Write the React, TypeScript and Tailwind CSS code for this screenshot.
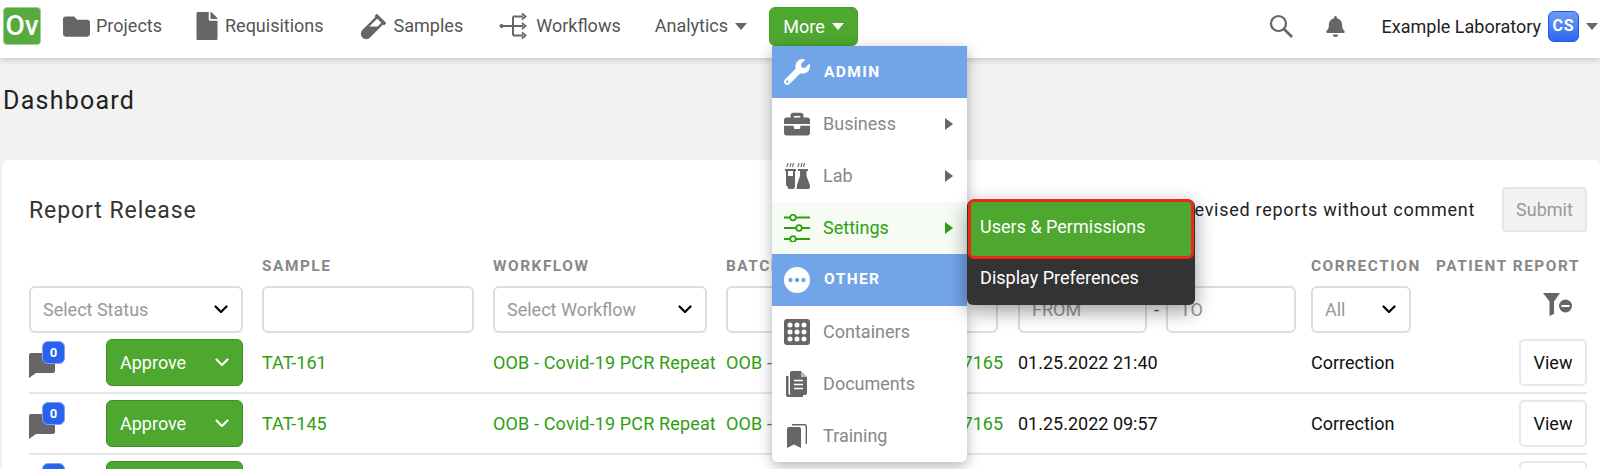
import React from "react";
import { FaFolder, FaFile, FaVial, FaWrench, FaBriefcase, FaBell } from "react-icons/fa";

const GRID = "grid grid-cols-[233px_231px_233px_150px_142px_293px_124px_152px]";

function Caret({ className = "" }: { className?: string }) {
  return <span className={`inline-block w-0 h-0 border-l-[6px] border-r-[6px] border-t-[7px] border-l-transparent border-r-transparent ${className}`} />;
}

function Chevron({ color = "#000", className = "" }: { color?: string; className?: string }) {
  return (
    <svg width="14" height="9" viewBox="0 0 14 9" className={className} fill="none">
      <path d="M1.5 1.5 L7 7 L12.5 1.5" stroke={color} strokeWidth="2.2" strokeLinecap="round" strokeLinejoin="round" />
    </svg>
  );
}

function WorkflowIcon() {
  return (
    <svg width="28" height="28" viewBox="0 0 28 28" fill="none" stroke="#666" strokeWidth="2">
      <circle cx="2.5" cy="14" r="2" fill="#666" stroke="none" />
      <path d="M3 14H24M14 4.5V23.5M14 4.5H24M14 23.5H24" />
      <path d="M23 1.5 L26.5 4.5 L23 7.5M23 11 L26.5 14 L23 17M23 20.5 L26.5 23.5 L23 26.5" strokeWidth="1.8" />
    </svg>
  );
}

function SlidersIcon() {
  return (
    <svg width="26" height="28" viewBox="0 0 26 28" fill="none" stroke="#2f9e12" strokeWidth="1.8">
      <path d="M0 3.5H6M12 3.5H26M0 14H12M18 14H26M0 25H6M12 25H26" />
      <circle cx="9" cy="3.5" r="2.8" />
      <circle cx="15" cy="14" r="2.8" />
      <circle cx="9" cy="25" r="2.8" />
    </svg>
  );
}

function LabIcon() {
  return (
    <svg width="26" height="27" viewBox="0 0 26 27" fill="#666">
      <path d="M1 7H12V9H11V23A3.8 3.8 0 0 1 3.4 24.4 4 4 0 0 1 2 23V9H1ZM4 9V14H9V9Z" />
      <path d="M14 7H24V9H22.5V14L26 23.5A2.4 2.4 0 0 1 23.8 27H12.5C13 25.5 13 24 13 23L16 14V9H14Z" />
      <path d="M4 1L3 5M7 1L6 5M9.5 1L8.5 5M15 1L14 5M18 1L17 5M20.5 1L19.5 5" stroke="#777" strokeWidth="1.2" />
    </svg>
  );
}

function ContainersIcon() {
  const dots: React.ReactNode[] = [];
  for (const y of [6, 13, 20]) for (const x of [6, 13, 20]) dots.push(<circle key={`${x}-${y}`} cx={x} cy={y} r="2.5" fill="#fff" />);
  return (
    <svg width="26" height="26" viewBox="0 0 26 26">
      <rect width="26" height="26" rx="3" fill="#666" />
      {dots}
    </svg>
  );
}

function DocumentsIcon() {
  return (
    <svg width="22" height="26" viewBox="0 0 22 26" fill="#666">
      <path d="M0 5H2.5V23.5H17V26H2A2 2 0 0 1 0 24Z" />
      <path d="M4 2A2 2 0 0 1 6 0H15L21 6V22A2 2 0 0 1 19 24H6A2 2 0 0 1 4 22Z" />
      <path d="M15 0V6H21Z" fill="#fff" opacity=".55" />
      <path d="M8 9.5H17M8 13.5H17M8 17.5H17" stroke="#fff" strokeWidth="1.4" />
    </svg>
  );
}

function TrainingIcon() {
  return (
    <svg width="20" height="24" viewBox="0 0 20 24" fill="#666">
      <path d="M0 5A2 2 0 0 1 2 3H12A2 2 0 0 1 14 5V24L7 20.5 0 24Z" />
      <path d="M5 0.7H18A1.5 1.5 0 0 1 19.3 2V20" fill="none" stroke="#666" strokeWidth="1.4" />
    </svg>
  );
}

function CommentIcon() {
  return (
    <svg width="26" height="26" viewBox="0 0 26 26" fill="#666">
      <path d="M0 3A2 2 0 0 1 2 1H24A2 2 0 0 1 26 3V19A2 2 0 0 1 24 21H7L0 26Z" />
    </svg>
  );
}

function FilterMinus() {
  return (
    <svg width="29" height="23" viewBox="0 0 29 23" fill="#666">
      <path d="M0 0H17L11 8.5V21L6.5 23V8.5Z" />
      <circle cx="22.5" cy="13" r="6.5" />
      <rect x="18.5" y="12" width="8" height="2" fill="#fff" />
    </svg>
  );
}

function NavLink({ icon, label, iconClass }: { icon: React.ReactNode; label: string; iconClass: string }) {
  return (
    <div className="flex items-center">
      <span className={`flex items-center justify-center text-[#666] ${iconClass}`}>{icon}</span>
      <span className="text-[#555] -mt-[1px]">{label}</span>
    </div>
  );
}

function MenuHeader({ icon, label, labelClass }: { icon: React.ReactNode; label: string; labelClass: string }) {
  return (
    <div className="h-[52px] bg-[#72a5e8] flex items-center pl-[12px] text-white">
      <span className="w-[26px] flex justify-center">{icon}</span>
      <span className={`ml-[14px] text-[15.5px] font-bold tracking-[0.09em] ${labelClass}`}>{label}</span>
    </div>
  );
}

function MenuItem({ icon, label, arrow, active, children }: { icon: React.ReactNode; label: string; arrow?: boolean; active?: boolean; children?: React.ReactNode }) {
  return (
    <div className={`relative h-[52px] flex items-center pl-[12px] ${active ? "bg-[#f6fcf4] text-[#2f9e12]" : "text-[#888]"}`}>
      <span className="w-[26px] flex justify-center">{icon}</span>
      <span className="ml-[13px]">{label}</span>
      {arrow && (
        <span className={`absolute left-[173px] top-[20px] w-0 h-0 border-t-[6px] border-b-[6px] border-l-[8px] border-t-transparent border-b-transparent ${active ? "border-l-[#2f9e12]" : "border-l-[#666]"}`} />
      )}
      {children}
    </div>
  );
}

function Select({ label, className }: { label: string; className: string }) {
  return (
    <div className={`h-[47px] border-2 border-[#ddd] rounded-[6px] flex items-center justify-between bg-white pl-[12px] pr-[13px] text-[#999] ${className}`}>
      <span>{label}</span>
      <Chevron />
    </div>
  );
}

function Input({ className, placeholder }: { className: string; placeholder?: string }) {
  return (
    <div className={`h-[47px] border-2 border-[#ddd] rounded-[6px] bg-white flex items-center pl-[12px] text-[#999] ${className}`}>{placeholder}</div>
  );
}

function Label({ children }: { children?: React.ReactNode }) {
  return <div className="text-[15.4px] leading-[20px] font-bold tracking-[0.1em] text-[#888] whitespace-nowrap">{children}</div>;
}

function Row({ sample, date, last }: { sample?: string; date?: string; last?: boolean }) {
  return (
    <div className={`${GRID} items-center py-[6px] ${last ? "" : "border-b-2 border-[#e5e5e5]"}`}>
      <div className="flex items-center justify-between w-[214px]">
        <div className="relative w-[36px] h-[26px] mt-[5px]">
          <CommentIcon />
          <span className="absolute left-[13px] top-[-11px] w-[23px] h-[23px] rounded-[6px] bg-[#2a62f0] border border-[#7fa3f5] text-white text-[13px] font-bold flex items-center justify-center">0</span>
        </div>
        <div className="w-[137px] h-[47px] rounded-[6px] bg-[#4ea72e] border border-[#3f9020] text-white flex items-center justify-between pl-[13px] pr-[13px]">
          <span>Approve</span>
          <Chevron color="#fff" />
        </div>
      </div>
      <div className="text-[#2f9e12]">{sample}</div>
      <div className="text-[#2f9e12] whitespace-nowrap tracking-[0.008em]">{sample ? "OOB - Covid-19 PCR Repeat" : ""}</div>
      <div className="text-[#2f9e12] whitespace-nowrap tracking-[0.008em]">{sample ? "OOB - Covid" : ""}</div>
      <div className="text-[#2f9e12] text-right pr-[15px]">{sample ? "7165" : ""}</div>
      <div className="text-[#111]">{date}</div>
      <div className="text-[#111]">{sample ? "Correction" : ""}</div>
      <div className="flex justify-end">
        <div className="w-[68px] h-[47px] rounded-[5px] border-2 border-[#e8e8e8] bg-white text-[#111] flex items-center justify-center">View</div>
      </div>
    </div>
  );
}

export default function App() {
  return (
    <div className="h-[469px] overflow-hidden bg-[#f2f2f2] font-['Roboto',sans-serif] text-[18px]">
      <nav className="relative z-20 h-[58px] bg-white shadow-[0_2px_6px_rgba(0,0,0,0.18)] flex items-center pl-[3px] pr-[2px] pb-[6px]">
        <div className="w-[38px] h-[38px] rounded-[4px] bg-[#56aa3e] border border-[#9fd08f] text-white font-medium text-[28px] leading-none flex items-center justify-center overflow-hidden">Ov</div>
        <div className="ml-[22px]"><NavLink iconClass="w-[27px] mr-[6px] text-[27px]" icon={<FaFolder />} label="Projects" /></div>
        <div className="ml-[33px]"><NavLink iconClass="w-[24px] mr-[6px] text-[28px]" icon={<FaFile />} label="Requisitions" /></div>
        <div className="ml-[36px]"><NavLink iconClass="w-[28px] mr-[6px] text-[27px]" icon={<FaVial />} label="Samples" /></div>
        <div className="ml-[36px]"><NavLink iconClass="w-[28px] mr-[9px]" icon={<WorkflowIcon />} label="Workflows" /></div>
        <div className="ml-[34px] flex items-center text-[#555]">
          <span className="-mt-[1px]">Analytics</span>
          <Caret className="ml-[7px] border-t-[#666]" />
        </div>
        <div className="relative ml-[22px]">
          <div className="w-[89px] h-[39px] rounded-[6px] bg-[#4ea72e] border border-[#45a025] text-white flex items-center justify-center">
            <span>More</span>
            <Caret className="ml-[7px] border-t-white" />
          </div>
          <div className="absolute z-30 left-[3px] top-[39px] w-[195px] bg-white rounded-b-[6px] shadow-[0_4px_14px_rgba(0,0,0,0.3)]">
            <MenuHeader label="ADMIN" labelClass="mt-[3px]" icon={<FaWrench className="text-[26px]" />} />
            <MenuItem label="Business" arrow icon={<FaBriefcase className="text-[26px] text-[#666]" />} />
            <MenuItem label="Lab" arrow icon={<LabIcon />} />
            <MenuItem label="Settings" arrow active icon={<SlidersIcon />}>
              <div className="absolute left-[195px] top-[-2px] w-[228px] h-[105px] rounded-[6px] bg-[#333] text-white shadow-[0_6px_20px_rgba(0,0,0,0.4)]">
                <div className="ml-[1px] w-[226px] h-[60px] rounded-[6px] bg-[#4ea72e] border-[3px] border-[#e8291c] flex items-center pl-[9px] pb-[5px] -mt-[1px]">Users &amp; Permissions</div>
                <div className="h-[46px] flex items-center pl-[13px] pb-[8px]">Display Preferences</div>
              </div>
            </MenuItem>
            <MenuHeader label="OTHER" labelClass="mt-[1px]" icon={
              <svg width="26" height="26" viewBox="0 0 26 26">
                <circle cx="13" cy="13" r="13" fill="#fff" />
                <circle cx="6.5" cy="13" r="2.2" fill="#72a5e8" />
                <circle cx="13" cy="13" r="2.2" fill="#72a5e8" />
                <circle cx="19.5" cy="13" r="2.2" fill="#72a5e8" />
              </svg>
            } />
            <MenuItem label="Containers" icon={<ContainersIcon />} />
            <MenuItem label="Documents" icon={<DocumentsIcon />} />
            <MenuItem label="Training" icon={<TrainingIcon />} />
          </div>
        </div>
        <div className="ml-auto flex items-center">
          <svg width="24" height="24" viewBox="0 0 24 24" fill="none" stroke="#666" strokeWidth="2.2">
            <circle cx="9.5" cy="9.5" r="7.5" />
            <path d="M15 15L23 23" strokeWidth="2.6" />
          </svg>
          <FaBell className="ml-[32px] text-[21px] text-[#666]" />
          <span className="ml-[36px] text-[#222]">Example Laboratory</span>
          <span className="ml-[7px] w-[31px] h-[31px] rounded-[6px] bg-linear-to-b from-[#6f9bf0] to-[#2c66ee] border border-[#1f55ee] text-white text-[16px] font-bold tracking-[0.06em] flex items-center justify-center">CS</span>
          <Caret className="ml-[7px] border-t-[#666]" />
        </div>
      </nav>
      <h1 className="h-[102px] pl-[3px] pb-[16px] flex items-center text-[25px] tracking-[0.05em] text-[#222] font-normal">Dashboard</h1>
      <main className="ml-[2px] h-[309px] bg-white rounded-t-[6px] pt-[27px] pl-[27px] pr-[13px]">
        <div className="h-[45px] flex items-center justify-between">
          <h2 className="mt-[3px] text-[23px] tracking-[0.04em] text-[#333] font-normal">Report Release</h2>
          <div className="flex items-center">
            <span className="text-[#222] tracking-[0.04em]">Release revised reports without comment</span>
            <div className="ml-[27px] w-[85px] h-[45px] rounded-[4px] border-2 border-[#e5e5e5] bg-[#f2f2f2] text-[#999] flex items-center justify-center">Submit</div>
          </div>
        </div>
        <div className={`${GRID} mt-[24px] mb-[10px]`}>
          <Label />
          <Label>SAMPLE</Label>
          <Label>WORKFLOW</Label>
          <Label>BATCH</Label>
          <Label />
          <Label />
          <Label>CORRECTION</Label>
          <div className="flex justify-end pr-[7px]"><Label>PATIENT REPORT</Label></div>
        </div>
        <div className={GRID}>
          <Select label="Select Status" className="w-[214px]" />
          <Input className="w-[212px]" />
          <Select label="Select Workflow" className="w-[214px]" />
          <Input className="w-[130px]" />
          <Input className="w-[122px]" />
          <div className="flex items-center text-[#555]">
            <Input className="w-[129px]" placeholder="FROM" />
            <span className="w-[19px] text-center">-</span>
            <Input className="w-[130px]" placeholder="TO" />
          </div>
          <Select label="All" className="w-[100px]" />
          <div className="flex justify-end pr-[15px] pt-[7px]"><FilterMinus /></div>
        </div>
        <Row sample="TAT-161" date="01.25.2022 21:40" />
        <Row sample="TAT-145" date="01.25.2022 09:57" />
        <Row last />
      </main>
    </div>
  );
}
